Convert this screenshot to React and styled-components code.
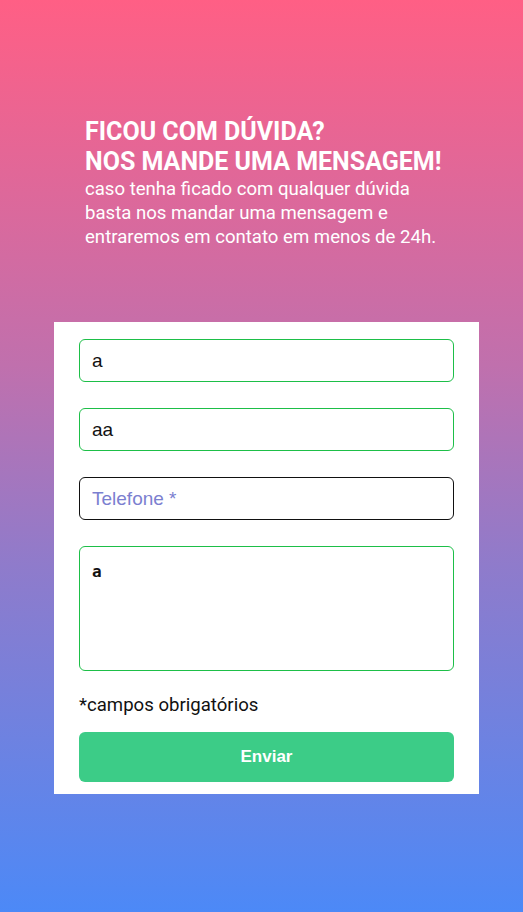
import React, { useState } from "react";
import styled, { createGlobalStyle } from "styled-components";

const GlobalStyle = createGlobalStyle`
  html, body {
    margin: 0;
    padding: 0;
  }
  body {
    font-family: Roboto, "Liberation Sans", sans-serif;
  }
  * {
    box-sizing: border-box;
  }
`;

const Page = styled.div`
  width: 523px;
  min-height: 912px;
  background: linear-gradient(180deg, #ff5f85 0%, #c070ad 40%, #8f7bcb 62%, #4c89f7 100%);
  padding: 117px 0 0 0;
`;

const Intro = styled.div`
  padding-left: 85px;
  color: #ffffff;
  margin-bottom: 73px;
`;

const Title = styled.h1`
  margin: 0;
  font-family: Roboto, sans-serif;
  font-weight: 700;
  font-size: 25px;
  line-height: 30px;
  text-transform: uppercase;
`;

const Lead = styled.p`
  margin: 0;
  font-family: Roboto, sans-serif;
  font-weight: 400;
  font-size: 18.6px;
  line-height: 24px;
`;

const Card = styled.form`
  margin-left: 54px;
  width: 425px;
  background: #ffffff;
  padding: 17px 25px 12px;
  display: flex;
  flex-direction: column;
`;

const Field = styled.input`
  width: 375px;
  height: 43px;
  border: 1px solid ${(p) => (p.$filled ? "#1dbf48" : "#111111")};
  border-radius: 6px;
  padding: 0 12px;
  margin-bottom: 26px;
  font-family: "Liberation Sans", Arial, sans-serif;
  font-size: 19px;
  color: #111111;
  outline: none;

  &::placeholder {
    color: #7b7fd0;
  }
`;

const Message = styled.textarea`
  width: 375px;
  height: 125px;
  border: 1px solid #1dbf48;
  border-radius: 6px;
  padding: 15px 12px;
  margin-bottom: 23px;
  font-family: "DejaVu Sans Mono", monospace;
  font-size: 16px;
  font-weight: 600;
  color: #111111;
  resize: none;
  outline: none;
`;

const Note = styled.p`
  margin: 0 0 16px;
  font-family: Roboto, sans-serif;
  font-size: 18.6px;
  line-height: 22px;
  color: #111111;
`;

const SendButton = styled.button`
  width: 375px;
  height: 50px;
  border: none;
  border-radius: 6px;
  background: #3ccc87;
  color: #ffffff;
  font-family: "Liberation Sans", Arial, sans-serif;
  font-weight: 700;
  font-size: 17px;
  cursor: pointer;
`;

export default function App() {
  const [name, setName] = useState("a");
  const [email, setEmail] = useState("aa");
  const [phone, setPhone] = useState("");
  const [text, setText] = useState("a");

  return (
    <>
      <GlobalStyle />
      <Page>
        <Intro>
          <Title>
            Ficou com dúvida?
            <br />
            Nos mande uma mensagem!
          </Title>
          <Lead>
            caso tenha ficado com qualquer dúvida
            <br />
            basta nos mandar uma mensagem e
            <br />
            entraremos em contato em menos de 24h.
          </Lead>
        </Intro>
        <Card onSubmit={(e) => e.preventDefault()}>
          <Field $filled value={name} onChange={(e) => setName(e.target.value)} />
          <Field $filled value={email} onChange={(e) => setEmail(e.target.value)} />
          <Field
            placeholder="Telefone *"
            value={phone}
            onChange={(e) => setPhone(e.target.value)}
          />
          <Message value={text} onChange={(e) => setText(e.target.value)} />
          <Note>*campos obrigatórios</Note>
          <SendButton type="submit">Enviar</SendButton>
        </Card>
      </Page>
    </>
  );
}
